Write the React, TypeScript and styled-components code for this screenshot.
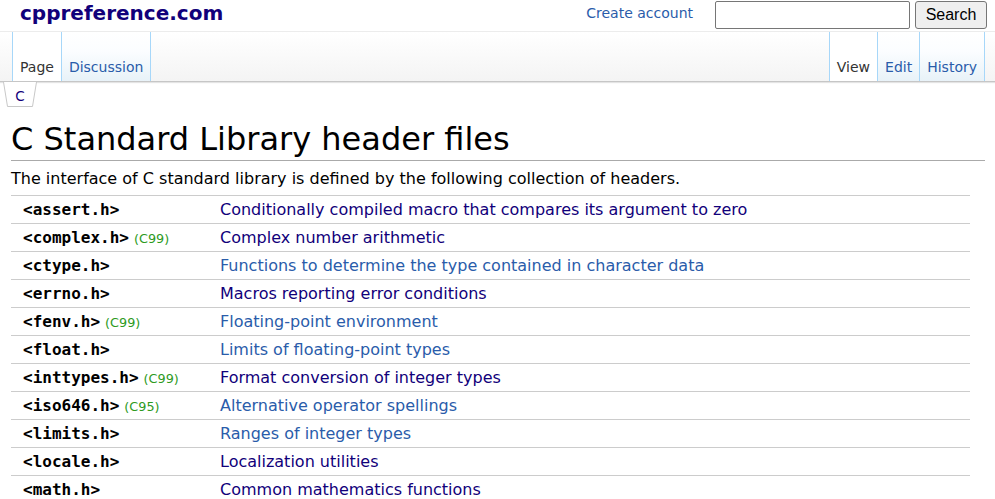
import React from 'react'
import styled, { createGlobalStyle } from 'styled-components'

const GlobalStyle = createGlobalStyle`
  body {
    margin: 0;
    background: #fff;
    font-family: "DejaVu Sans", sans-serif;
    color: #000;
  }
`

type Header = {
  name: string
  rev?: string
  desc: string
  visited?: boolean
}

const headers: Header[] = [
  { name: '<assert.h>', desc: 'Conditionally compiled macro that compares its argument to zero', visited: true },
  { name: '<complex.h>', rev: '(C99)', desc: 'Complex number arithmetic', visited: true },
  { name: '<ctype.h>', desc: 'Functions to determine the type contained in character data' },
  { name: '<errno.h>', desc: 'Macros reporting error conditions', visited: true },
  { name: '<fenv.h>', rev: '(C99)', desc: 'Floating-point environment' },
  { name: '<float.h>', desc: 'Limits of floating-point types' },
  { name: '<inttypes.h>', rev: '(C99)', desc: 'Format conversion of integer types', visited: true },
  { name: '<iso646.h>', rev: '(C95)', desc: 'Alternative operator spellings' },
  { name: '<limits.h>', desc: 'Ranges of integer types' },
  { name: '<locale.h>', desc: 'Localization utilities', visited: true },
  { name: '<math.h>', desc: 'Common mathematics functions', visited: true },
]

const App = () => {
  return (
    <>
      <GlobalStyle />
      <TopBar>
        <Logo>cppreference.com</Logo>
        <TopRight>
          <UserLink>Create account</UserLink>
          <SearchForm>
            <SearchInput type="text" />
            <SearchButton>Search</SearchButton>
          </SearchForm>
        </TopRight>
      </TopBar>
      <TabBar>
        <TabGroup>
          <Tab $selected>Page</Tab>
          <Tab>Discussion</Tab>
        </TabGroup>
        <TabGroup>
          <Tab $selected>View</Tab>
          <Tab>Edit</Tab>
          <Tab>History</Tab>
        </TabGroup>
      </TabBar>
      <Crumbs>
        <Crumb>
          <svg width="34" height="25" viewBox="0 0 34 25">
            <path d="M0.5 0 L4.5 24.5 L29.5 24.5 L33.5 0" fill="#fff" stroke="#c8c8c8" />
          </svg>
          <CrumbText>C</CrumbText>
        </Crumb>
      </Crumbs>
      <Content>
        <Title>C Standard Library header files</Title>
        <Intro>The interface of C standard library is defined by the following collection of headers.</Intro>
        <HeaderList>
          {headers.map((h) => (
            <Row key={h.name}>
              <NameCell>
                <Mono>{h.name}</Mono>
                {h.rev && <Rev>{h.rev}</Rev>}
              </NameCell>
              <DescCell>
                <DescLink $visited={h.visited}>{h.desc}</DescLink>
              </DescCell>
            </Row>
          ))}
        </HeaderList>
      </Content>
    </>
  )
}

export default App

const TopBar = styled.div`
  height: 31px;
  display: flex;
  justify-content: space-between;
  align-items: flex-start;
  border-bottom: 1px solid #ececec;
`
const Logo = styled.div`
  margin: 1px 0 0 20px;
  font-size: 20px;
  font-weight: 700;
  color: #11007a;
  line-height: 24px;
`
const TopRight = styled.div`
  display: flex;
  align-items: flex-start;
`
const UserLink = styled.a`
  font-size: 14px;
  line-height: 18px;
  margin-top: 4px;
  color: #2a5caa;
  cursor: pointer;
`
const SearchForm = styled.div`
  display: flex;
  gap: 5px;
  margin: 1px 8px 0 22px;
`
const SearchInput = styled.input`
  box-sizing: border-box;
  width: 195px;
  height: 28px;
  border: 1px solid #767676;
  border-radius: 2px;
  padding: 0 4px;
`
const SearchButton = styled.button`
  box-sizing: border-box;
  height: 28px;
  width: 72px;
  font-family: "Liberation Sans", Arial, sans-serif;
  font-size: 16px;
  color: #000;
  background: #efefef;
  border: 1px solid #767676;
  border-radius: 3px;
  padding: 0;
`
const TabBar = styled.div`
  height: 49px;
  display: flex;
  justify-content: space-between;
  padding: 0 10px 0 12px;
  background: linear-gradient(to bottom, #ffffff 0%, #f4f4f4 100%);
  border-bottom: 1px solid #c6c6c6;
  box-shadow: 0 1px 1px #e4e4e4;
`
const TabGroup = styled.div`
  display: flex;
  border-left: 1px solid #a7d7f9;
`
const Tab = styled.a<{ $selected?: boolean }>`
  display: flex;
  align-items: flex-end;
  padding: 0 7px 5px 7px;
  font-size: 14px;
  line-height: 18px;
  border-right: 1px solid #a7d7f9;
  color: ${(p) => (p.$selected ? '#333' : '#2a5caa')};
  background: ${(p) =>
    p.$selected ? '#fff' : 'linear-gradient(to bottom, #ffffff 0%, #fbfdff 40%, #e8f2f8 100%)'};
  cursor: pointer;
`
const Crumbs = styled.div`
  padding: 0 0 0 3px;
  height: 25px;
`
const Crumb = styled.div`
  position: relative;
  width: 34px;
  height: 25px;
  svg {
    position: absolute;
    top: 0;
    left: 0;
  }
`
const CrumbText = styled.a`
  position: relative;
  display: block;
  text-align: center;
  padding-top: 6px;
  font-size: 13.5px;
  line-height: 17px;
  color: #11007a;
`
const Content = styled.div`
  padding: 0 10px 0 11px;
`
const Title = styled.h1`
  margin: 13px 0 0;
  font-size: 32px;
  font-weight: 400;
  line-height: 39px;
  padding-bottom: 1px;
  border-bottom: 1px solid #aaa;
`
const Intro = styled.p`
  margin: 7px 0 0;
  font-size: 16px;
  line-height: 22px;
`
const HeaderList = styled.div`
  margin-top: 5px;
  width: 959px;
  font-size: 16px;
`
const Row = styled.div`
  display: flex;
  align-items: center;
  height: 27px;
  border-top: 1px solid #ccc;
`
const NameCell = styled.div`
  box-sizing: border-box;
  flex: 0 0 209px;
  padding-left: 12px;
  white-space: nowrap;
  display: flex;
  align-items: baseline;
`
const Mono = styled.code`
  font-family: "DejaVu Sans Mono", monospace;
  font-weight: 700;
  font-size: 16px;
`
const Rev = styled.span`
  margin-left: 5px;
  font-size: 12.8px;
  color: #2d9a1d;
`
const DescCell = styled.div`
  flex: 1;
  white-space: nowrap;
`
const DescLink = styled.a<{ $visited?: boolean }>`
  color: ${(p) => (p.$visited ? '#11007a' : '#2a5caa')};
  cursor: pointer;
`
